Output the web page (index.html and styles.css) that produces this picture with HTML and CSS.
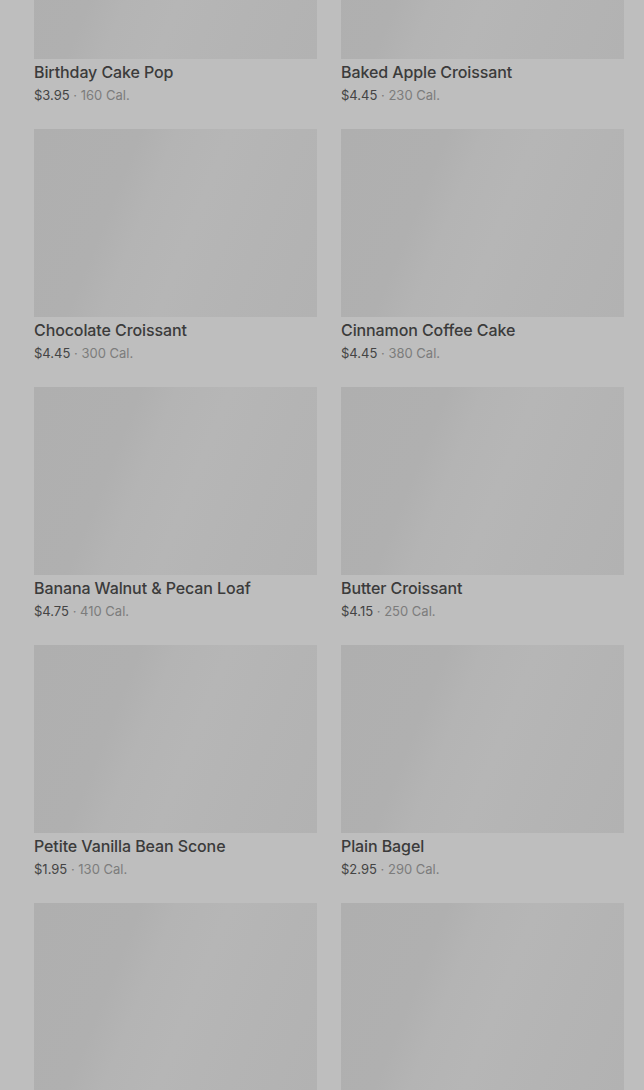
FILE: index.html
```html
<!DOCTYPE html>
<html lang="en">
<head>
    <meta charset="UTF-8">
    <meta name="viewport" content="width=device-width, initial-scale=1.0">
    <title>Bakery Menu</title>
    <link rel="stylesheet" href="styles.css">
</head>
<body>
    <div class="menu-grid">
        <div class="product">
            <div class="product-image"></div>
            <div class="product-name">Birthday Cake Pop</div>
            <div class="product-info">$3.95 <span class="cal">· 160 Cal.</span></div>
        </div>
        <div class="product">
            <div class="product-image"></div>
            <div class="product-name">Baked Apple Croissant</div>
            <div class="product-info">$4.45 <span class="cal">· 230 Cal.</span></div>
        </div>
        <div class="product">
            <div class="product-image"></div>
            <div class="product-name">Chocolate Croissant</div>
            <div class="product-info">$4.45 <span class="cal">· 300 Cal.</span></div>
        </div>
        <div class="product">
            <div class="product-image"></div>
            <div class="product-name">Cinnamon Coffee Cake</div>
            <div class="product-info">$4.45 <span class="cal">· 380 Cal.</span></div>
        </div>
        <div class="product">
            <div class="product-image"></div>
            <div class="product-name">Banana Walnut &amp; Pecan Loaf</div>
            <div class="product-info">$4.75 <span class="cal">· 410 Cal.</span></div>
        </div>
        <div class="product">
            <div class="product-image"></div>
            <div class="product-name">Butter Croissant</div>
            <div class="product-info">$4.15 <span class="cal">· 250 Cal.</span></div>
        </div>
        <div class="product">
            <div class="product-image"></div>
            <div class="product-name">Petite Vanilla Bean Scone</div>
            <div class="product-info">$1.95 <span class="cal">· 130 Cal.</span></div>
        </div>
        <div class="product">
            <div class="product-image"></div>
            <div class="product-name">Plain Bagel</div>
            <div class="product-info">$2.95 <span class="cal">· 290 Cal.</span></div>
        </div>
        <div class="product">
            <div class="product-image"></div>
        </div>
        <div class="product">
            <div class="product-image"></div>
        </div>
    </div>
</body>
</html>
```

FILE: styles.css
```css
html, body {
    margin: 0;
    padding: 0;
    background: #bebebe;
    height: 100%;
    overflow: hidden;
}
body {
    font-family: Inter, "Noto Sans", sans-serif;
    color: #3b3b3b;
}
.menu-grid {
    display: grid;
    grid-template-columns: 1fr 1fr;
    column-gap: 24px;
    row-gap: 23px;
    padding: 0 20px 0 34px;
    margin-top: -129px;
}
.product-image {
    height: 188px;
    background: linear-gradient(112deg, #afafaf 0%, #b0b0b0 30%, #b4b4b4 40%, #b6b6b6 55%, #b4b4b4 75%, #b2b2b2 100%);
}
.product-name {
    margin-top: 1px;
    font-size: 16px;
    font-weight: 500;
    line-height: 24px;
    letter-spacing: -0.1px;
    color: #3b3b3b;
}
.product-info {
    padding-top: 1px;
    font-size: 13px;
    line-height: 21px;
    color: #444;
}
.cal {
    color: #7c7c7c;
}
```
